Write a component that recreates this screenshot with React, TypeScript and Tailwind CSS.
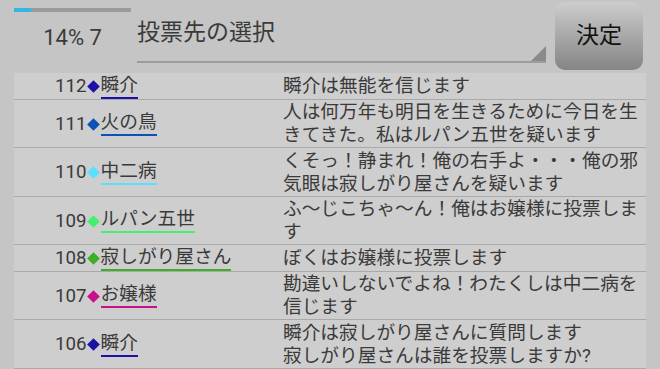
import React from "react";

const rows = [
  { no: 112, name: "瞬介", color: "bg-[#1d10a6]", line: "border-[#1d10a6]", msg: ["瞬介は無能を信じます"] },
  { no: 111, name: "火の鳥", color: "bg-[#0d50b8]", line: "border-[#0d50b8]", msg: ["人は何万年も明日を生きるために今日を生", "きてきた。私はルパン五世を疑います"] },
  { no: 110, name: "中二病", color: "bg-[#5ae0ff]", line: "border-[#5ae0ff]", msg: ["くそっ！静まれ！俺の右手よ・・・俺の邪", "気眼は寂しがり屋さんを疑います"] },
  { no: 109, name: "ルパン五世", color: "bg-[#46f06e]", line: "border-[#46f06e]", msg: ["ふ〜じこちゃ〜ん！俺はお嬢様に投票しま", "す"] },
  { no: 108, name: "寂しがり屋さん", color: "bg-[#3cae28]", line: "border-[#3cae28]", msg: ["ぼくはお嬢様に投票します"] },
  { no: 107, name: "お嬢様", color: "bg-[#c8108c]", line: "border-[#c8108c]", msg: ["勘違いしないでよね！わたくしは中二病を", "信じます"] },
  { no: 106, name: "瞬介", color: "bg-[#1d10a6]", line: "border-[#1d10a6]", msg: ["瞬介は寂しがり屋さんに質問します", "寂しがり屋さんは誰を投票しますか?"] },
];

export default function App() {
  return (
    <div
      className="w-[660px] h-[369px] overflow-hidden bg-[#c5c5c5] text-[#3a3a3a]"
      style={{ fontFamily: 'Roboto, "Noto Sans CJK JP", sans-serif' }}
    >
      {/* Header */}
      <div className="flex h-[73px]">
        <div className="ml-[14px] w-[117px] pt-[8px]">
          <div className="h-[4px] bg-[#9a9a9a]">
            <div className="h-full w-[17px] bg-[#33b5e5]" />
          </div>
          <div className="mt-[13px] text-center text-[22px] leading-[26px]">14% 7</div>
        </div>
        <div className="relative ml-[6px] w-[409px] h-[63px] border-b-2 border-[#9c9c9c]">
          <div className="pt-[16px] text-[23px] leading-[34px]">投票先の選択</div>
          <div className="absolute right-0 bottom-0 w-0 h-0 border-l-[15px] border-l-transparent border-b-[15px] border-b-[#8a8a8a]" />
        </div>
        <div className="ml-[9px] mt-[2px] w-[88px] h-[68px] rounded-[10px] bg-gradient-to-b from-[#cdcdcd] to-[#858585] flex items-center justify-center text-[23px] text-[#111]">
          決定
        </div>
      </div>

      {/* List */}
      <div className="ml-[14px] w-[632px] bg-[#cecece]">
        {rows.map((r, i) => (
          <div key={i} className="flex items-center border-b border-[#a9a9a9] pt-[1.5px] text-[18.7px] leading-[23px]">
            <div className="w-[269px] pl-[41px] flex items-center">
              <span>{r.no}</span>
              <span className={`inline-block w-[9px] h-[9px] rotate-45 mx-[2.5px] ${r.color}`} />
              <span className={`inline-block border-b-2 pb-px leading-[21px] ${r.line}`}>{r.name}</span>
            </div>
            <div className="flex-1 whitespace-nowrap">
              {r.msg.map((m, j) => (
                <div key={j}>{m}</div>
              ))}
            </div>
          </div>
        ))}
      </div>
    </div>
  );
}
